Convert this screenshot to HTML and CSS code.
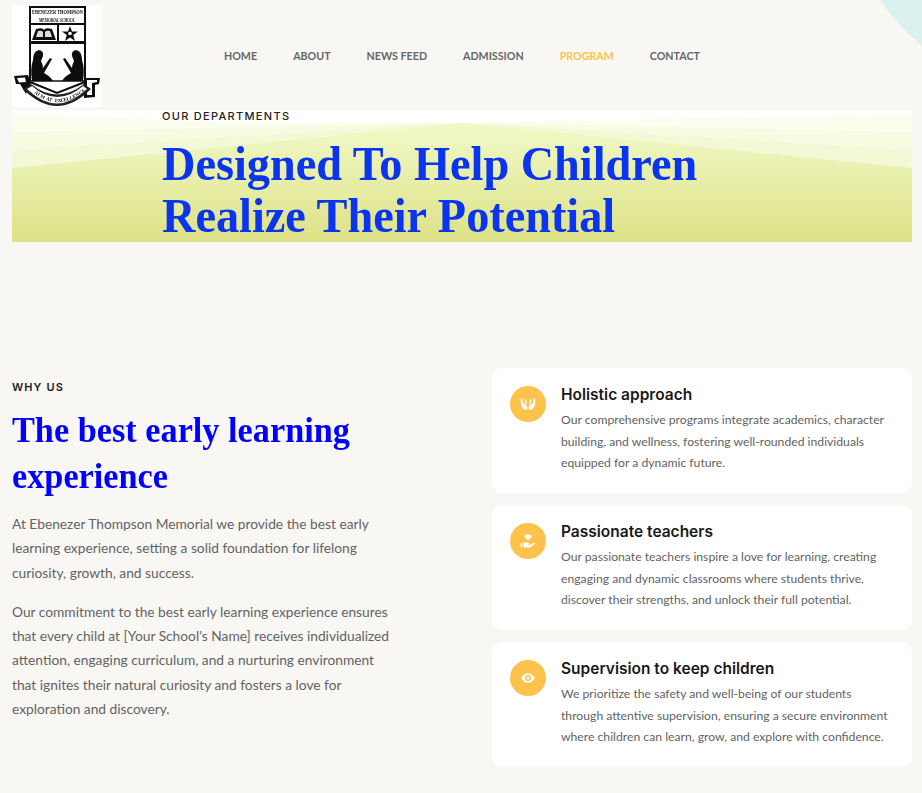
FILE: index.html
```html
<!DOCTYPE html>
<html lang="en">
<head>
<meta charset="utf-8">
<title>Ebenezer Thompson Memorial School</title>
<link rel="stylesheet" href="styles.css">
</head>
<body>
<svg class="corner" viewBox="0 0 42 46" width="42" height="46"><path d="M0 0H42V46A222 222 0 0 1 0 0Z" fill="#dbf1ef"/></svg>
<header class="header">
  <div class="logo">
    <svg viewBox="0 0 90 102" width="90" height="102">
      <defs>
        <filter id="soft" x="-5%" y="-5%" width="110%" height="110%"><feGaussianBlur stdDeviation="0.35"/></filter>
      </defs>
      <rect width="90" height="102" fill="#fff"/>
      <g filter="url(#soft)">
        <g fill="none" stroke="#111">
          <path d="M18 2H73V77L45 88L18 77Z" stroke-width="2"/>
          <path d="M18 19H73M46 19V37" stroke-width="2"/>
          <path d="M18 37.5H73" stroke-width="3"/>
          <path d="M18 76H73" stroke-width="1.5"/>
        </g>
        <text class="logo-text" x="20" y="9" textLength="51" lengthAdjust="spacingAndGlyphs">EBENEZER THOMPSON</text>
        <text class="logo-text" x="27" y="16.5" textLength="36" lengthAdjust="spacingAndGlyphs">MEMORIAL SCHOOL</text>
        <path d="M20 35L24 24Q31 22 32 25Q33 22 40 24L44 35Z" fill="#111"/>
        <path d="M24 32L26 26Q30 25 31 27V32ZM40 32L38 26Q34 25 33 27V32Z" fill="#ddd"/>
        <path d="M58 21L60 26.5H66L61.2 30L63 36L58 32.5L53 36L54.8 30L50 26.5H56Z" fill="#111"/>
        <circle cx="58" cy="28.5" r="1.8" fill="#fff"/>
        <path d="M20 76Q18 64 21 55Q21 46 27 45Q32 46 31 51L29 56Q31 60 31 63L38 53L40 54L32 68Q38 71 41 76Z" fill="#111"/>
        <path d="M71 76Q73 64 70 55Q70 46 64 45Q59 46 60 51L62 56Q60 60 60 63L53 53L51 54L59 68Q53 71 50 76Z" fill="#111"/>
        <path d="M2 71L16 70L19 78L14 89L8 79L4 79Z" fill="#111"/>
        <path d="M5 73L13 72.5L14 77L7 77.5Z" fill="#fff"/>
        <path d="M72 73L88 73L87 79L83 80L83 92L72 93Z" fill="#111"/>
        <path d="M75 75H85V77L80 78V90L75 90Z" fill="#fff"/>
        <path d="M11 84Q45 118 79 84L72 79Q45 100 19 79Z" fill="#222"/>
        <path d="M15 84Q45 113 75 84L71 81Q45 103 20 81Z" fill="#fff"/>
        <text class="logo-motto" x="22 24.9 27.8 30.7 33.7 36.7 39.7 42.7 45.8 48.8 51.9 55 58.2 61.4 64.5 67.8 71" y="88 90.1 91.9 93.5 94.8 95.7 96.4 96.9 97 96.9 96.4 95.7 94.8 93.5 91.9 90.1 88" rotate="38 34 30 25 20 15 11 5 0 -5 -11 -15 -20 -25 -30 -34 -38">AIM AT EXCELLENCE</text>
      </g>
    </svg>
  </div>
  <nav class="nav">
    <a class="nav-link" href="#">HOME</a>
    <a class="nav-link" href="#">ABOUT</a>
    <a class="nav-link" href="#">NEWS FEED</a>
    <a class="nav-link" href="#">ADMISSION</a>
    <a class="nav-link active" href="#">PROGRAM</a>
    <a class="nav-link" href="#">CONTACT</a>
  </nav>
</header>
<section class="hero">
  <svg class="hero-bg" viewBox="0 0 900 132" preserveAspectRatio="none">
    <defs>
      <linearGradient id="heroGrad" x1="0" y1="0" x2="0" y2="1">
        <stop offset="0" stop-color="#f1f9c8"/>
        <stop offset="1" stop-color="#dde287"/>
      </linearGradient>
    </defs>
    <path d="M0 0H900V132H0Z" fill="#fff"/>
    <path d="M0 3Q150 12 300 12L450 13L900 4V132H0Z" fill="#fbfeee"/>
    <path d="M0 22L450 13L900 22V132H0Z" fill="#f7fbe2"/>
    <path d="M0 40L450 13L900 40V132H0Z" fill="#f3f9d6"/>
    <path d="M0 58L450 13L900 58V132H0Z" fill="url(#heroGrad)"/>
  </svg>
  <div class="hero-content">
    <p class="hero-eyebrow">OUR DEPARTMENTS</p>
    <h1 class="hero-title">Designed To Help Children<br>Realize Their Potential</h1>
  </div>
</section>
<main class="why">
  <div class="why-left">
    <p class="why-eyebrow">WHY US</p>
    <h2 class="why-title">The best early learning experience</h2>
    <p class="why-text">At Ebenezer Thompson Memorial we provide the best early learning experience, setting a solid foundation for lifelong curiosity, growth, and success.</p>
    <p class="why-text">Our commitment to the best early learning experience ensures that every child at [Your School's Name] receives individualized attention, engaging curriculum, and a nurturing environment that ignites their natural curiosity and fosters a love for exploration and discovery.</p>
  </div>
  <div class="why-right">
    <article class="card">
      <span class="card-icon">
        <svg viewBox="0 0 16 16" width="16" height="16" fill="#fff"><path d="M0.5 2.5L2.3 2.5L3 7L7.3 10V13.5H4L1 9ZM15.5 2.5L13.7 2.5L13 7L8.7 10V13.5H12L15 9ZM4.6 3.5L6 3.2L7 8.6L5 7.2ZM11.4 3.5L10 3.2L9 8.6L11 7.2Z"/></svg>
      </span>
      <div class="card-body">
        <h3 class="card-title">Holistic approach</h3>
        <p class="card-text">Our comprehensive programs integrate academics, character building, and wellness, fostering well-rounded individuals equipped for a dynamic future.</p>
      </div>
    </article>
    <article class="card">
      <span class="card-icon">
        <svg viewBox="0 0 16 16" width="16" height="16" fill="#fff"><path d="M8 7.5L4.9 4.4A1.9 1.9 0 0 1 8 2.2A1.9 1.9 0 0 1 11.1 4.4Z"/><path d="M0.5 10H2.5V14.5H0.5ZM3.5 10Q5 9 6.5 9.5L9 10Q10 10.5 9.3 11.5H7V12H10L13.5 9.8Q15 9.5 15.3 10.6L11 14Q9.5 14.8 8 14.5H3.5Z"/></svg>
      </span>
      <div class="card-body">
        <h3 class="card-title">Passionate teachers</h3>
        <p class="card-text">Our passionate teachers inspire a love for learning, creating engaging and dynamic classrooms where students thrive, discover their strengths, and unlock their full potential.</p>
      </div>
    </article>
    <article class="card">
      <span class="card-icon">
        <svg viewBox="0 0 16 16" width="16" height="16"><path fill="#fff" fill-rule="evenodd" d="M1 8Q4 3.2 8 3.2T15 8Q12 12.8 8 12.8T1 8ZM8 5A3 3 0 1 0 8 11A3 3 0 1 0 8 5Z"/><circle cx="8" cy="8" r="1.6" fill="#fff"/></svg>
      </span>
      <div class="card-body">
        <h3 class="card-title">Supervision to keep children</h3>
        <p class="card-text">We prioritize the safety and well-being of our students through attentive supervision, ensuring a secure environment where children can learn, grow, and explore with confidence.</p>
      </div>
    </article>
  </div>
</main>
</body>
</html>
```
FILE: styles.css
```css
* { box-sizing: border-box; }
html, body { margin: 0; padding: 0; }
body {
  background: #f9f7f3;
  font-family: "Lato", "Noto Sans", sans-serif;
  color: #5f5f5f;
  padding: 0 10px 0 12px;
  height: 793px;
  overflow: hidden;
  position: relative;
}
.corner {
  position: absolute;
  top: 0;
  right: 0;
  display: block;
}
.header {
  display: flex;
  height: 110px;
  position: relative;
}
.logo { margin-top: 5px; width: 90px; height: 102px; flex: none; }
.logo svg { display: block; }
.logo-text {
  font-family: "Liberation Serif", serif;
  font-size: 5.5px;
  font-weight: 700;
  fill: #111;
}
.logo-motto {
  font-family: "Liberation Serif", serif;
  font-size: 5px;
  font-weight: 700;
  fill: #111;
}
.nav {
  display: flex;
  gap: 36px;
  margin-left: 122px;
  align-items: center;
  height: 110px;
}
.nav-link {
  font-size: 10.7px;
  font-weight: 700;
  color: #666;
  text-decoration: none;
}
.nav-link.active { color: #fcc24c; }
.hero {
  position: relative;
  height: 132px;
  width: 900px;
}
.hero-bg { position: absolute; inset: 0; width: 100%; height: 100%; display: block; }
.hero-content { position: relative; padding-left: 150px; }
.hero-eyebrow {
  margin: 0;
  font-family: "Inter", sans-serif;
  font-size: 11px;
  font-weight: 500;
  letter-spacing: 1.3px;
  line-height: 13px;
  color: #222;
  padding-bottom: 15px;
}
.hero-title {
  margin: 0;
  font-family: "Liberation Serif", serif;
  font-size: 48px;
  font-weight: 700;
  line-height: 52px;
  color: #0a34ee;
  transform: scaleX(0.964);
  transform-origin: left top;
}
.why {
  display: flex;
  justify-content: space-between;
  padding-top: 126px;
}
.why-left { width: 382px; padding-top: 13px; }
.why-eyebrow {
  margin: 0 0 13px;
  font-family: "Inter", sans-serif;
  font-size: 11px;
  font-weight: 600;
  letter-spacing: 1.1px;
  line-height: 13px;
  color: #1c1c1c;
}
.why-title {
  margin: 0 0 13px;
  font-family: "Liberation Serif", serif;
  font-size: 36px;
  font-weight: 700;
  line-height: 46px;
  color: #0000ff;
  transform: scaleX(0.952);
  transform-origin: left top;
}
.why-text {
  margin: 0 0 15px;
  font-size: 13.75px;
  line-height: 24.3px;
  color: #636363;
}
.why-right {
  width: 420px;
  display: flex;
  flex-direction: column;
  gap: 12px;
}
.card {
  display: flex;
  gap: 15px;
  height: 125px;
  padding: 18px;
  background: #fff;
  border-radius: 10px;
}
.card-icon {
  flex: none;
  width: 36px;
  height: 36px;
  border-radius: 50%;
  background: #fcc24c;
  display: flex;
  align-items: center;
  justify-content: center;
}
.card-body { min-width: 0; }
.card-title {
  margin: 0 0 6px;
  font-family: "Inter", sans-serif;
  font-size: 15.5px;
  font-weight: 600;
  line-height: 17px;
  color: #191919;
}
.card-text {
  margin: 0;
  font-size: 12.2px;
  line-height: 21.6px;
  color: #636363;
}
```
